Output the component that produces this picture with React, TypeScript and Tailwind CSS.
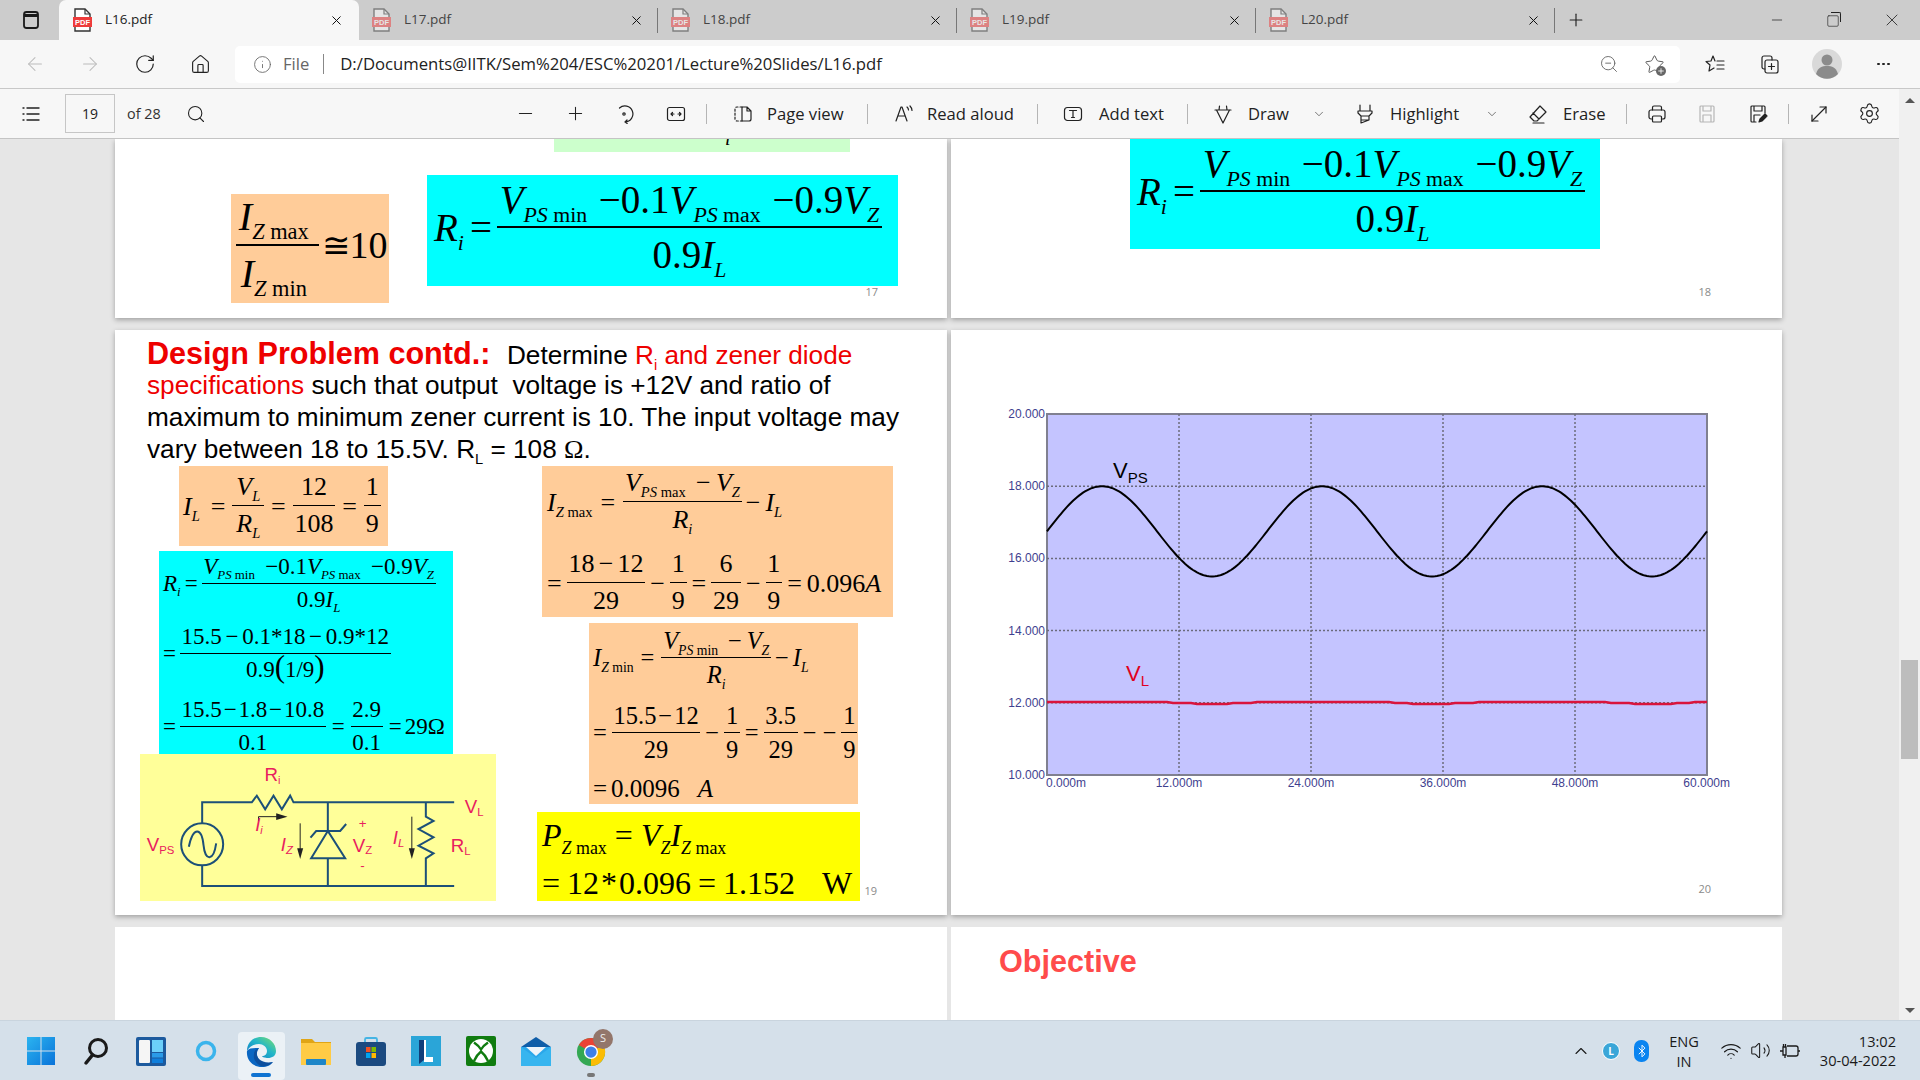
import type { ReactNode } from "react";
import {
  ArrowLeft,
  ArrowRight,
  Bluetooth,
  ChevronDown,
  ChevronUp,
  House,
  Info,
  Minus,
  MoveDiagonal,
  Plus,
  RotateCw,
  Search,
  Settings,
  Square,
  Star,
  Volume2,
  Wifi,
  X,
  ZoomOut,
} from "lucide-react";

// ---------- math helpers ----------

function Sub({ children }: { children: ReactNode }) {
  return <span className="text-[0.56em] align-[-0.42em] leading-[0]">{children}</span>;
}

function Var({ n, sub }: { n: string; sub?: ReactNode }) {
  return (
    <span className="whitespace-nowrap">
      <i>{n}</i>
      {sub ? <Sub>{sub}</Sub> : null}
    </span>
  );
}

function Frac({ top, bottom, bar = "border-b" }: { top: ReactNode; bottom: ReactNode; bar?: string }) {
  return (
    <span className="inline-flex flex-col items-stretch text-center px-0">
      <span className={`h-[1.12em] leading-[0.8em] px-[0.07em] whitespace-nowrap border-black ${bar}`}>{top}</span>
      <span className="h-[1.12em] leading-[1.38em] px-[0.07em] whitespace-nowrap">{bottom}</span>
    </span>
  );
}

// minus with the wider and the tighter math spacing
const M = () => <span className="mx-[0.16em]">−</span>;
const Mt = () => <span className="mx-[0.08em]">−</span>;

const PSmin = (
  <>
    <i>PS</i> min
  </>
);
const PSmax = (
  <>
    <i>PS</i> max
  </>
);
const Zmax = (
  <>
    <i>Z</i> max
  </>
);
const Zmin = (
  <>
    <i>Z</i> min
  </>
);

function RiTop({ gap = "ml-[0.3em]" }: { gap?: string }) {
  return (
    <>
      <Var n="V" sub={PSmin} />
      <span className={gap}>−</span>0.1
      <Var n="V" sub={PSmax} />
      <span className={gap}>−</span>0.9
      <Var n="V" sub={<i>Z</i>} />
    </>
  );
}

// ---------- small pdf mark used in tabs ----------

function PdfIcon({ faded }: { faded?: boolean }) {
  return (
    <svg width="19" height="24" viewBox="0 0 19 24" className={faded ? "opacity-50" : ""}>
      <path d="M2 1h10l5 5v17H2z" fill="#fff" stroke="#333" strokeWidth="1.4" />
      <path d="M12 1v5h5" fill="none" stroke="#333" strokeWidth="1.2" />
      <rect x="0" y="9" width="19" height="10" fill="#ee3b3b" />
      <text x="9.5" y="17" textAnchor="middle" fontSize="7.5" fontWeight="700" fill="#fff" fontFamily="Liberation Sans">
        PDF
      </text>
    </svg>
  );
}

function Tab({ name, active }: { name: string; active?: boolean }) {
  return (
    <div
      className={
        active
          ? "flex items-center justify-between w-[300px] h-[40px] pl-[14px] pr-[15px] bg-[#f7f7f7] rounded-t-[7px] text-[#222]"
          : "flex items-center justify-between w-[299px] h-[40px] pl-[13px] pr-[14px] text-[#444] relative"
      }
    >
      <div className="flex items-center gap-[13px]">
        <PdfIcon faded={!active} />
        <span className="text-[13.5px] mb-[2px]">{name}</span>
      </div>
      <X size={15} strokeWidth={1.6} className="text-[#111]" />
      {active ? null : <div className="absolute right-0 top-[8px] h-[25px] w-px bg-[#777]" />}
    </div>
  );
}

function Ico({ children }: { children: ReactNode }) {
  return (
    <svg
      width="20"
      height="20"
      viewBox="0 0 20 20"
      fill="none"
      stroke="currentColor"
      strokeWidth="1.2"
      strokeLinecap="round"
      strokeLinejoin="round"
      className="shrink-0 text-[#222]"
    >
      {children}
    </svg>
  );
}

function Sep({ ml }: { ml: string }) {
  return <div className={`w-px h-[20px] bg-[#b5b5b5] shrink-0 ${ml}`} />;
}

function Toolbar() {
  return (
    <div className="flex items-center h-[50px] bg-[#f7f7f7] border-b border-[#c4c4c4] text-[16.6px] text-[#222]">
      <div className="ml-[21px]">
        <Ico>
          <path d="M2 4h1M6 4h12M2 10h1M6 10h12M2 16h1M6 16h12" strokeWidth="1.4" />
        </Ico>
      </div>
      <div className="ml-[24px] w-[50px] h-[39px] border border-[#c6c6c6] flex items-center justify-center text-[14px]">19</div>
      <span className="ml-[12px] w-[34px] text-[14.4px] whitespace-nowrap text-[#333]">of 28</span>
      <Search size={20} strokeWidth={1.3} className="ml-[25px]" />
      <Minus size={21} strokeWidth={1.2} className="ml-[309px]" />
      <Plus size={21} strokeWidth={1.2} className="ml-[29px]" />
      <div className="ml-[28px]">
        <Ico>
          <path d="M5.500 4A8 8 0 1 1 11 17.900M11 17.900L13 16M11 17.900L13.200 19.500" />
          <circle cx="10" cy="10" r="1.200" />
        </Ico>
      </div>
      <div className="ml-[32px]">
        <Ico>
          <rect x="1.5" y="3.5" width="17" height="13" rx="2" />
          <path d="M5 10h3M5 10l1.5-1.5M5 10l1.5 1.5M15 10h-3M15 10l-1.5-1.5M15 10l-1.5 1.5" />
        </Ico>
      </div>
      <Sep ml="ml-[20px]" />
      <div className="ml-[26px]">
        <Ico>
          <path d="M9 3H4a2 2 0 0 0-2 2v10a2 2 0 0 0 2 2h5" strokeDasharray="2 2" />
          <path d="M9 3h5l4 4v8a2 2 0 0 1-2 2H9zM14 3v4h4" />
        </Ico>
      </div>
      <span className="ml-[14px] w-[78px] pt-[2px] whitespace-nowrap">Page view</span>
      <Sep ml="ml-[22px]" />
      <div className="ml-[26px]">
        <Ico>
          <path d="M2 17l5-14h1l5 14M4 12h7" />
          <path d="M13 3c1 .8 1.500 1.800 1.500 3M16 2c1.300 1.300 2 2.700 2 4.500" />
        </Ico>
      </div>
      <span className="ml-[13px] w-[87px] pt-[2px] whitespace-nowrap">Read aloud</span>
      <Sep ml="ml-[23px]" />
      <div className="ml-[25px]">
        <Ico>
          <rect x="1.500" y="3.500" width="17" height="13" rx="3" />
          <path d="M6.500 6.500h7M10 6.500v7M8.500 13.500h3" />
        </Ico>
      </div>
      <span className="ml-[16px] w-[65px] pt-[2px] whitespace-nowrap">Add text</span>
      <Sep ml="ml-[23px]" />
      <div className="ml-[25px]">
        <Ico>
          <path d="M2 6h16M3.500 6L10 19l6.500-13M6 6l.5-4M14 6l-.5-4" />
        </Ico>
      </div>
      <span className="ml-[15px] w-[41px] pt-[2px] whitespace-nowrap">Draw</span>
      <ChevronDown size={14} strokeWidth={1.2} className="ml-[23px] text-[#444]" />
      <div className="ml-[29px]">
        <Ico>
          <path d="M5 1v6h10V1M3 7h14v2l-3 3v4H6v-4L3 9zM6 12h8M6 16v3l8-3" />
        </Ico>
      </div>
      <span className="ml-[15px] w-[72px] pt-[2px] whitespace-nowrap">Highlight</span>
      <ChevronDown size={14} strokeWidth={1.2} className="ml-[23px] text-[#444]" />
      <div className="ml-[29px]">
        <Ico>
          <path d="M12 2l6 6-9 9H6l-4-4zM5 9l6 6M5 19h11" />
        </Ico>
      </div>
      <span className="ml-[15px] w-[40px] pt-[2px] whitespace-nowrap">Erase</span>
      <Sep ml="ml-[23px]" />
      <div className="ml-[20px]">
        <Ico>
          <path d="M5.500 6V3.500a1.500 1.500 0 0 1 1.500-1.500h6a1.500 1.500 0 0 1 1.500 1.500V6" />
          <path d="M5 15H4a2 2 0 0 1-2-2V8a2 2 0 0 1 2-2h12a2 2 0 0 1 2 2v5a2 2 0 0 1-2 2h-1" />
          <rect x="5.500" y="12" width="9" height="6" rx="1" />
        </Ico>
      </div>
      <div className="ml-[30px] opacity-30">
        <Ico>
          <path d="M3 3a1 1 0 0 1 1-1h12a1 1 0 0 1 1 1v14a1 1 0 0 1-1 1H4a1 1 0 0 1-1-1zM6 2v5h8V2M6 18v-7h8v7" />
        </Ico>
      </div>
      <div className="ml-[31px]">
        <Ico>
          <path d="M8 18H4a1 1 0 0 1-1-1V3a1 1 0 0 1 1-1h12a1 1 0 0 1 1 1v6M6 2v5h8V2M6 18v-7h6" />
          <path d="M11 18l1-3 5-5 2 2-5 5z" fill="currentColor" />
        </Ico>
      </div>
      <Sep ml="ml-[20px]" />
      <MoveDiagonal size={24} strokeWidth={1.2} className="ml-[18px]" />
      <Settings size={23} strokeWidth={1.2} className="ml-[27px]" />
    </div>
  );
}

function AddressBar() {
  return (
    <div className="flex items-center h-[49px] bg-[#f7f7f7] border-b border-[#c8c8c8] text-[#222]">
      <ArrowLeft size={22} strokeWidth={1.1} className="ml-[24px] text-[#bbb]" />
      <ArrowRight size={22} strokeWidth={1.1} className="ml-[33px] text-[#bbb]" />
      <RotateCw size={22} strokeWidth={1.3} className="ml-[33px]" />
      <House size={21} strokeWidth={1.3} className="ml-[34px]" />
      <div className="ml-[24px] w-[1445px] h-[37px] bg-white rounded-[5px] flex items-center">
        <Info size={19} strokeWidth={1.1} className="ml-[18px] text-[#666]" />
        <span className="ml-[11px] text-[#666] text-[16.6px]">File</span>
        <div className="ml-[14px] w-px h-[20px] bg-[#888]" />
        <span className="ml-[16px] text-[16.7px] whitespace-nowrap">D:/Documents@IITK/Sem%204/ESC%20201/Lecture%20Slides/L16.pdf</span>
        <ZoomOut size={20} strokeWidth={1.1} className="ml-auto text-[#666]" />
        <div className="relative ml-[25px] mr-[15px]">
          <Star size={21} strokeWidth={1.1} className="text-[#555]" />
          <div className="absolute -right-[1px] bottom-[-1px] w-[10px] h-[10px] rounded-full bg-[#666] flex items-center justify-center">
            <Plus size={8} strokeWidth={2.5} className="text-white" />
          </div>
        </div>
      </div>
      <div className="ml-[25px]">
        <Ico>
          <path d="M8 2l2 5M8 2L6 7l-5 .5 4 3.500L4 17l5-3M12 7h7M12 11h7M12 15h7" />
        </Ico>
      </div>
      <div className="ml-[35px]">
        <Ico>
          <rect x="5" y="6" width="13" height="13" rx="2" />
          <path d="M5 15H4a2 2 0 0 1-2-2V4a2 2 0 0 1 2-2h6a2 2 0 0 1 2 2v2M11.500 9.500v6M8.500 12.500h6" />
        </Ico>
      </div>
      <svg width="30" height="30" viewBox="0 0 30 30" className="ml-[32px] shrink-0">
        <circle cx="15" cy="15" r="15" fill="#d9d9d9" />
        <circle cx="15" cy="11" r="5.500" fill="#8b8b8b" />
        <path d="M4 25c2-7 6-8 11-8s9 1 11 8a15 15 0 0 1-22 0z" fill="#8b8b8b" />
      </svg>
      <div className="ml-[35px] flex gap-[2.500px]">
        <div className="w-[2.500px] h-[2.500px] rounded-full bg-[#222]" />
        <div className="w-[2.500px] h-[2.500px] rounded-full bg-[#222]" />
        <div className="w-[2.500px] h-[2.500px] rounded-full bg-[#222]" />
      </div>
    </div>
  );
}

// ---------- slide pieces ----------

function PageNo({ n, right, top }: { n: string; right: string; top: string }) {
  return <span className={`absolute ${right} ${top} text-[11px] text-[#8a8a8a] font-['Open_Sans',sans-serif]`}>{n}</span>;
}

function BigRi({ h }: { h: string }) {
  return (
    <div className={`flex items-center ${h} text-[39px] font-['Liberation_Serif',serif] text-black`}>
      <span className="ml-[7px]">
        <Var n="R" sub={<i>i</i>} />
      </span>
      <span className="ml-[6px] mr-[5px]">=</span>
      <Frac
        bar="border-b-2"
        top={<RiTop />}
        bottom={
          <>
            0.9<Var n="I" sub={<i>L</i>} />
          </>
        }
      />
    </div>
  );
}

function Slide17() {
  return (
    <div className="relative w-[832px] h-full bg-white overflow-hidden shadow-[0_2px_5px_rgba(0,0,0,0.3)]">
      <div className="ml-[439px] w-[296px] h-[13px] bg-[#ccffcc] overflow-hidden pl-[171px]">
        <i className="block -mt-[11px] text-[20px] leading-[20px] font-['Liberation_Serif',serif]">i</i>
      </div>
      <div className="flex items-start mt-[23px] ml-[116px]">
        <div className="mt-[19px] w-[158px] h-[109px] bg-[#ffcc99] flex items-center pl-[5px] pb-[6px] text-[40px] font-['Liberation_Serif',serif]">
          <Frac
            bar="border-b-2"
            top={
              <span className="pr-[7px]">
                <Var n="I" sub={Zmax} />
              </span>
            }
            bottom={
              <span className="pr-[7px]">
                <Var n="I" sub={Zmin} />
              </span>
            }
          />
          <span className="ml-[3px] font-['DejaVu_Sans',serif] font-extralight text-[34px]">≅</span>
          <span className="text-[38px]">10</span>
        </div>
        <div className="ml-[38px] w-[471px] h-[111px] bg-[#00ffff]">
          <BigRi h="h-[106px]" />
        </div>
      </div>
      <PageNo n="17" right="right-[69px]" top="top-[145px]" />
    </div>
  );
}

function Slide18() {
  return (
    <div className="relative w-[831px] h-full bg-white overflow-hidden shadow-[0_2px_5px_rgba(0,0,0,0.3)]">
      <div className="ml-[179px] w-[470px] h-[110px] bg-[#00ffff]">
        <BigRi h="h-[106px]" />
      </div>
      <PageNo n="18" right="right-[71px]" top="top-[145px]" />
    </div>
  );
}

function Circuit() {
  const wire = "#1c5078";
  const pink = "#e8205f";
  return (
    <svg viewBox="30 12 1067 441" className="w-[356px] h-[147px] bg-[#ffff99]" fontFamily="Liberation Sans">
      <g fill="none" stroke={wire} strokeWidth="6">
        <path d="M216 220V157H365L380 137L405 178L430 137L455 178L480 137L490 157H972" />
        <path d="M216 346V408H972" />
        <circle cx="216" cy="283" r="63" />
        <path d="M176 290C190 225 215 235 220 285C225 335 250 335 258 280" />
        <path d="M593 157V243M593 325V408" />
        <path d="M593 243L543 325H645Z" />
        <path d="M541 263L558 243H630L648 222" />
        <path d="M887 157V200L910 213L865 237L910 262L865 287L910 310L887 325V408" />
      </g>
      <g fill="none" stroke="#222" strokeWidth="3">
        <path d="M385 213V200H450" />
        <path d="M510 220V305" />
        <path d="M845 200V305" />
      </g>
      <path d="M438 190L472 200L438 210Z" fill="#222" />
      <path d="M501 295L510 327L519 295Z" fill="#222" />
      <path d="M836 295L845 327L854 295Z" fill="#222" />
      <g fill={pink} fontSize="56">
        <text x="403" y="94">
          R<tspan fontSize="32" dy="8">i</tspan>
        </text>
        <text x="50" y="304">
          V<tspan fontSize="34" dy="8">PS</tspan>
        </text>
        <text x="1004" y="190">
          V<tspan fontSize="34" dy="8">L</tspan>
        </text>
        <text x="962" y="306">
          R<tspan fontSize="34" dy="8">L</tspan>
        </text>
        <text x="668" y="305">
          V<tspan fontSize="34" dy="8">Z</tspan>
        </text>
        <text x="686" y="234" fontSize="40">+</text>
        <text x="690" y="360" fontSize="40">-</text>
        <text x="375" y="244" fontStyle="italic">
          I<tspan fontSize="32" dy="8">i</tspan>
        </text>
        <text x="452" y="304" fontStyle="italic">
          I<tspan fontSize="34" dy="8">Z</tspan>
        </text>
        <text x="788" y="282" fontStyle="italic">
          I<tspan fontSize="34" dy="8">L</tspan>
        </text>
      </g>
    </svg>
  );
}

function Slide19() {
  const red = "text-[#ee0000]";
  return (
    <div className="relative w-[832px] h-full bg-white shadow-[0_2px_5px_rgba(0,0,0,0.3)] font-['Liberation_Sans',sans-serif]">
      <div className="h-[136px] pl-[32px] pt-[7px] text-black text-[26.2px]">
        <div className="h-[32px] leading-[32px] whitespace-pre">
          <b className={`text-[30.6px] ${red}`}>Design Problem contd.:</b>
          <span className="ml-[2px]">{"  Determine "}</span>
          <span className={red}>
            R<Sub>i</Sub> and zener diode
          </span>
        </div>
        <div className="h-[32px] leading-[32px] whitespace-pre">
          <span className={red}>specifications</span> such that output  voltage is +12V and ratio of
        </div>
        <div className="h-[32px] leading-[32px] whitespace-pre">maximum to minimum zener current is 10. The input voltage may</div>
        <div className="h-[32px] leading-[32px] whitespace-pre">
          vary between 18 to 15.5V. R<Sub>L</Sub> = 108 <span className="font-['Liberation_Serif',serif]">Ω</span>.
        </div>
      </div>
      <div className="flex ml-[25px] font-['Liberation_Serif',serif] text-black">
        <div className="flex flex-col w-[356px]">
          <div className="ml-[39px] w-[209px] h-[80px] bg-[#ffcc99] flex items-center pl-[4px] text-[26px] gap-[7px]">
            <Var n="I" sub={<i>L</i>} />
            <span className="ml-[4px]">=</span>
            <Frac
              top={
                <span className="px-[2px]">
                  <Var n="V" sub={<i>L</i>} />
                </span>
              }
              bottom={
                <span className="px-[2px]">
                  <Var n="R" sub={<i>L</i>} />
                </span>
              }
            />
            <span>=</span>
            <Frac top="12" bottom="108" />
            <span>=</span>
            <Frac top="1" bottom="9" />
          </div>
          <div className="ml-[19px] mt-[5px] w-[294px] h-[203px] bg-[#00ffff] overflow-hidden text-[23px] pl-[4px]">
            <div className="flex items-center h-[66px]">
              <Var n="R" sub={<i>i</i>} />
              <span className="mx-[4px]">=</span>
              <Frac
                top={<RiTop gap="ml-[0.45em]" />}
                bottom={
                  <>
                    0.9<Var n="I" sub={<i>L</i>} />
                  </>
                }
              />
            </div>
            <div className="flex items-center h-[74px]">
              <span className="mr-[4px]">=</span>
              <Frac
                top={
                  <>
                    15.5
                    <M />
                    0.1*18
                    <M />
                    0.9*12
                  </>
                }
                bottom={
                  <>
                    0.9<span className="text-[1.35em] leading-[0] font-light">(</span>1/9
                    <span className="text-[1.35em] leading-[0] font-light">)</span>
                  </>
                }
              />
            </div>
            <div className="flex items-center h-[72px]">
              <span className="mr-[4px]">=</span>
              <Frac
                top={
                  <>
                    15.5
                    <Mt />
                    1.8
                    <Mt />
                    10.8
                  </>
                }
                bottom="0.1"
              />
              <span className="mx-[6px]">=</span>
              <Frac top="2.9" bottom="0.1" />
              <span className="ml-[6px] whitespace-nowrap">
                =<span className="ml-[3px]">29Ω</span>
              </span>
            </div>
          </div>
          <Circuit />
        </div>
        <div className="flex flex-col ml-[41px]">
          <div className="ml-[5px] w-[351px] h-[151px] bg-[#ffcc99] overflow-hidden pl-[5px] text-[26px]">
            <div className="flex items-center h-[72px]">
              <Var n="I" sub={Zmax} />
              <span className="mx-[8px]">=</span>
              <Frac
                top={
                  <>
                    <Var n="V" sub={PSmax} />
                    <span className="ml-[0.4em] mr-[0.2em]">−</span>
                    <Var n="V" sub={<i>Z</i>} />
                  </>
                }
                bottom={<Var n="R" sub={<i>i</i>} />}
              />
              <span className="ml-[4px] whitespace-nowrap">
                <span className="mr-[5px]">−</span>
                <Var n="I" sub={<i>L</i>} />
              </span>
            </div>
            <div className="flex items-center h-[90px] gap-[5px]">
              <span>=</span>
              <Frac
                top={
                  <>
                    18
                    <M />
                    12
                  </>
                }
                bottom="29"
              />
              <span>−</span>
              <Frac top="1" bottom="9" />
              <span>=</span>
              <Frac top="6" bottom="29" />
              <span>−</span>
              <Frac top="1" bottom="9" />
              <span className="whitespace-nowrap">
                =<span className="ml-[5px]">0.096</span>
                <i>A</i>
              </span>
            </div>
          </div>
          <div className="ml-[52px] mt-[6px] w-[269px] h-[181px] bg-[#ffcc99] overflow-hidden pl-[4px] text-[24.5px]">
            <div className="flex items-center h-[70px]">
              <Var n="I" sub={Zmin} />
              <span className="mx-[7px]">=</span>
              <Frac
                top={
                  <>
                    <Var n="V" sub={PSmin} />
                    <span className="ml-[0.4em] mr-[0.2em]">−</span>
                    <Var n="V" sub={<i>Z</i>} />
                  </>
                }
                bottom={<Var n="R" sub={<i>i</i>} />}
              />
              <span className="ml-[4px] whitespace-nowrap">
                <span className="mr-[4px]">−</span>
                <Var n="I" sub={<i>L</i>} />
              </span>
            </div>
            <div className="flex items-center h-[80px] gap-[5px]">
              <span>=</span>
              <Frac
                top={
                  <>
                    15.5
                    <Mt />
                    12
                  </>
                }
                bottom="29"
              />
              <span>−</span>
              <Frac top="1" bottom="9" />
              <span>=</span>
              <Frac top="3.5" bottom="29" />
              <span className="whitespace-pre">− −</span>
              <Frac top="1" bottom="9" />
            </div>
            <div className="h-[31px] leading-[31px] whitespace-pre text-[25px]">
              =<span className="ml-[4px]">0.0096</span>
              <i className="ml-[18px]">A</i>
            </div>
          </div>
          <div className="mt-[8px] w-[323px] h-[89px] bg-[#ffff00] overflow-hidden pl-[5px] text-[32px]">
            <div className="h-[46px] leading-[46px] whitespace-pre">
              <Var n="P" sub={Zmax} />
              <span className="mx-[8px]">=</span>
              <Var n="V" sub={<i>Z</i>} />
              <Var n="I" sub={Zmax} />
            </div>
            <div className="h-[50px] leading-[50px] whitespace-pre">
              =<span className="ml-[7px]">12</span>
              <span className="mx-[2px]">*</span>0.096
              <span className="mx-[7px]">=</span>1.152<span className="ml-[27px]">W</span>
            </div>
          </div>
        </div>
      </div>
      <PageNo n="19" right="right-[70px]" top="top-[553px]" />
    </div>
  );
}

function Chart() {
  const axis = "#3f3f8f";
  const x0 = 57;
  const x1 = 717;
  const y0 = 14;
  const y1 = 375;
  const vToY = (v: number) => y1 - ((v - 10) / 10) * (y1 - y0);
  const sine = Array.from({ length: 331 }, (_, i) => {
    const x = x0 + i * 2;
    const t = i * 2 / 11;
    const v = 16.75 + 1.25 * Math.sin((2 * Math.PI * t) / 20);
    return `${x},${vToY(v).toFixed(1)}`;
  }).join(" ");
  const load = Array.from({ length: 111 }, (_, i) => {
    const x = x0 + i * 6;
    const t = i * 6 / 11;
    const dip = Math.max(0, -Math.sin((2 * Math.PI * t) / 20) - 0.1);
    return `${x},${(302 + Math.round(dip * 2)).toFixed(0)}`;
  }).join(" ");
  const xs = [0, 12, 24, 36, 48, 60];
  const ys = [20, 18, 16, 14, 12, 10];
  return (
    <svg viewBox="0 0 760 400" className="w-[760px] h-[400px]" fontFamily="Liberation Sans">
      <rect x={x0} y={y0} width={x1 - x0} height={y1 - y0} fill="#c4c4ff" stroke="#808090" strokeWidth="2" />
      {[12, 24, 36, 48].map((m) => (
        <line key={m} x1={x0 + m * 11} x2={x0 + m * 11} y1={y0} y2={y1} stroke="#6b6b7b" strokeWidth="1.500" strokeDasharray="2 2" />
      ))}
      {[18, 16, 14, 12].map((v) => (
        <line key={v} x1={x0} x2={x1} y1={vToY(v)} y2={vToY(v)} stroke="#6b6b7b" strokeWidth="1.500" strokeDasharray="2 2" />
      ))}
      <polyline points={sine} fill="none" stroke="#000" strokeWidth="2" />
      <polyline points={load} fill="none" stroke="#d9143c" strokeWidth="2.500" />
      {ys.map((v) => (
        <text key={v} x={x0 - 2} y={vToY(v) + 4} textAnchor="end" fontSize="12" fill={axis}>
          {v}.000
        </text>
      ))}
      {xs.map((m) => (
        <text
          key={m}
          x={m === 0 ? x0 - 1 : m === 60 ? x1 + 23 : x0 + m * 11}
          y={387}
          textAnchor={m === 0 ? "start" : m === 60 ? "end" : "middle"}
          fontSize="12"
          fill={axis}
        >
          {m === 0 ? "0.000m" : `${m}.000m`}
        </text>
      ))}
      <text x="123" y="78" fontSize="22" fill="#000">
        V<tspan fontSize="15" dy="5">PS</tspan>
      </text>
      <text x="136" y="281" fontSize="22" fill="#e00020">
        V<tspan fontSize="15" dy="5">L</tspan>
      </text>
    </svg>
  );
}

function Slide20() {
  return (
    <div className="relative w-[831px] h-full bg-white shadow-[0_2px_5px_rgba(0,0,0,0.3)]">
      <div className="ml-[39px] pt-[70px]">
        <Chart />
      </div>
      <PageNo n="20" right="right-[71px]" top="top-[551px]" />
    </div>
  );
}

function Pages() {
  return (
    <div className="h-[881px] bg-[#e6e6e6] overflow-hidden pl-[115px] flex flex-col gap-[12px]">
      <div className="flex gap-[4px] h-[179px] shrink-0">
        <Slide17 />
        <Slide18 />
      </div>
      <div className="flex gap-[4px] h-[585px] shrink-0">
        <Slide19 />
        <Slide20 />
      </div>
      <div className="flex gap-[4px] h-[93px] shrink-0">
        <div className="w-[832px] bg-white" />
        <div className="w-[831px] bg-white pl-[48px] pt-[12px] text-[30.6px] font-bold text-[#ff4b4b] font-['Liberation_Sans',sans-serif]">Objective</div>
      </div>
    </div>
  );
}

function Scrollbar() {
  return (
    <div className="w-[21px] bg-[#f0f0f0] flex flex-col items-center">
      <div className="mt-[9px] w-0 h-0 border-x-[5px] border-x-transparent border-b-[5px] border-b-[#555]" />
      <div className="mt-[557px] w-[17px] h-[99px] bg-[#bdbdbd]" />
      <div className="mt-auto mb-[7px] w-0 h-0 border-x-[5px] border-x-transparent border-t-[5px] border-t-[#555]" />
    </div>
  );
}

// ---------- taskbar icons ----------

function Taskbar() {
  return (
    <div className="relative h-[60px] bg-[#d5e0ea] border-t border-[#c9d4de] flex items-center pl-[26px] gap-[25px] font-['Open_Sans',sans-serif] text-[#1a1a1a]">
      <svg width="30" height="30" viewBox="0 0 30 30" className="shrink-0">
        <defs>
          <linearGradient id="winb" x1="0" y1="0" x2="1" y2="1">
            <stop offset="0" stopColor="#2bb4f0" />
            <stop offset="1" stopColor="#0a73d9" />
          </linearGradient>
        </defs>
        <path d="M1 1h13.500v13.500H1zM15.500 1H29v13.500H15.500zM1 15.500h13.500V29H1zM15.500 15.500H29V29H15.500z" fill="url(#winb)" />
      </svg>
      <svg width="30" height="30" viewBox="0 0 30 30" className="shrink-0">
        <circle cx="17" cy="12" r="8.500" fill="none" stroke="#1a1a1a" strokeWidth="3" />
        <path d="M11.500 19L5 27" stroke="#1a1a1a" strokeWidth="3.500" strokeLinecap="round" />
      </svg>
      <svg width="30" height="30" viewBox="0 0 30 30" className="shrink-0">
        <rect width="30" height="29" y="1" rx="2" fill="#1c5a9e" />
        <rect x="3" y="4" width="11" height="23" rx="1" fill="#f5f5f5" />
        <rect x="16" y="4" width="11" height="12" fill="#6cd0fa" />
        <rect x="16" y="17" width="11" height="4.500" fill="#2a9be8" />
        <rect x="16" y="22.500" width="11" height="4.500" fill="#0f7fdc" />
      </svg>
      <svg width="30" height="30" viewBox="0 0 30 30" className="shrink-0">
        <ellipse cx="15" cy="15" rx="8.500" ry="8.500" fill="none" stroke="#3ab4ec" strokeWidth="3.500" />
      </svg>
      <div className="relative w-[30px] h-[30px] shrink-0">
        <div className="absolute -left-[8px] -top-[4px] w-[47px] h-[48px] rounded-[4px] bg-[#ebf1f6]" />
        <div className="absolute left-[5px] top-[37px] w-[20px] h-[4px] rounded-full bg-[#0f73d2]" />
        <svg width="30" height="32" viewBox="0 0 30 32" className="relative">
          <defs>
            <linearGradient id="edg" x1="0" y1="1" x2="1" y2="0">
              <stop offset="0" stopColor="#0c72c8" />
              <stop offset="0.55" stopColor="#22b6c8" />
              <stop offset="1" stopColor="#7ee06a" />
            </linearGradient>
          </defs>
          <path d="M1 15C1 6 8 1 15 1c9 0 15 7 15 14 0 5-4 7-8 7-3 0-6-1-6-2 3 0 5-2 5-5 0-4-4-7-8-7C7 8 3 11 1 15z" fill="url(#edg)" />
          <path d="M1 15C0 25 8 31 16 31c5 0 9-2 11-5-4 2-12 2-15-4-2-4-1-7 1-10-6 0-10 0-12 3z" fill="#0a66c2" />
          <path d="M13 12c-3 3-3 8 0 11 3 3 8 4 14 3-4 4-9 5-12 4 -5-2-8-7-7-12 0-3 2-5 5-6z" fill="#0c4f9e" />
        </svg>
      </div>
      <svg width="30" height="30" viewBox="0 0 30 30" className="shrink-0">
        <path d="M0 3h11l3 3h16v4H0z" fill="#e0a516" />
        <rect y="7" width="30" height="22" fill="#ffcb45" />
        <rect x="5" y="23" width="20" height="6" rx="1" fill="#1e86c8" />
      </svg>
      <svg width="30" height="30" viewBox="0 0 30 30" className="shrink-0">
        <path d="M9 7V3.500A1.500 1.500 0 0 1 10.500 2h9A1.500 1.500 0 0 1 21 3.500V7" fill="none" stroke="#45b4e4" strokeWidth="1.800" />
        <rect y="6" width="30" height="24" rx="3" fill="#1b4a80" />
        <rect x="10" y="11" width="4.500" height="5" fill="#f25022" />
        <rect x="15.500" y="11" width="4.500" height="5" fill="#7fba00" />
        <rect x="10" y="17" width="4.500" height="5" fill="#00a4ef" />
        <rect x="15.500" y="17" width="4.500" height="5" fill="#ffb900" />
      </svg>
      <svg width="30" height="30" viewBox="0 0 30 30" className="shrink-0">
        <rect width="30" height="30" fill="#2aa5d8" />
        <path d="M8 4h5v20l-5 4z" fill="#103e7a" />
        <path d="M13 4h2v17h7v5H13z" fill="#fff" />
      </svg>
      <svg width="30" height="30" viewBox="0 0 30 30" className="shrink-0">
        <rect width="30" height="30" rx="2" fill="#107c10" />
        <circle cx="15" cy="15" r="12" fill="#fff" />
        <path d="M8 6.500C11 8.500 13.500 11 15 13.500C16.500 11 19 8.500 22 6.500M8 25C10 20.500 12.500 17.500 15 15.500C17.500 17.500 20 20.500 22 25" fill="none" stroke="#107c10" strokeWidth="2.400" />
      </svg>
      <svg width="30" height="30" viewBox="0 0 30 30" className="shrink-0">
        <path d="M0 11L15 1l15 10z" fill="#0f5da8" />
        <path d="M0 11h30v19H0z" fill="#2aa7ea" />
        <path d="M5 11h20L15 20z" fill="#eef4fa" />
        <path d="M0 11L15 22 30 11v19H0z" fill="#37b5ef" />
      </svg>
      <div className="relative w-[30px] h-[30px] shrink-0">
        <svg width="30" height="32" viewBox="0 0 32 32">
          <circle cx="16" cy="16" r="15" fill="#34a853" />
          <path d="M16 16L3 8.500A15 15 0 0 1 29 8.500z" fill="#ea4335" />
          <path d="M16 16L29 8.500A15 15 0 0 1 16 31z" fill="#fbbc05" />
          <circle cx="16" cy="16" r="7.500" fill="#fff" />
          <circle cx="16" cy="16" r="6" fill="#3f7fe8" />
        </svg>
        <div className="absolute left-[17px] -top-[7px] w-[20px] h-[20px] rounded-full bg-[#93766b] text-[#eee] text-[11px] flex items-center justify-center">S</div>
        <div className="absolute left-[11px] top-[37px] w-[8px] h-[4px] rounded-full bg-[#777]" />
      </div>

      <div className="ml-auto flex items-center h-full pr-[24px] text-[14.6px]">
        <ChevronUp size={20} strokeWidth={1.3} />
        <div className="ml-[11px] w-[18px] h-[18px] rounded-full bg-[#3aa6d8] border border-white flex items-center justify-center text-[10px] font-bold text-white leading-none">L</div>
        <div className="ml-[14px] w-[15px] h-[22px] rounded-[7px] bg-[#0a84f0] flex items-center justify-center">
          <Bluetooth size={14} strokeWidth={1.6} className="text-white" />
        </div>
        <div className="ml-[15px] w-[40px] flex flex-col items-center leading-[20px]">
          <span>ENG</span>
          <span>IN</span>
        </div>
        <Wifi size={22} strokeWidth={1.3} className="ml-[16px]" />
        <Volume2 size={21} strokeWidth={1.2} className="ml-[8px]" />
        <svg width="22" height="22" viewBox="0 0 22 22" fill="none" stroke="#1a1a1a" strokeWidth="1.300" className="ml-[8px]">
          <path d="M8 6h9a2 2 0 0 1 2 2v6a2 2 0 0 1-2 2H8" />
          <path d="M19 11h2M1 11h3M4 7h3v8H4zM4.500 4v3M6.500 4v3M6 15v3" />
        </svg>
        <div className="ml-[8px] w-[87px] flex flex-col items-end leading-[19px]">
          <span>13:02</span>
          <span>30-04-2022</span>
        </div>
      </div>
    </div>
  );
}

export default function App() {
  return (
    <div className="w-[1920px] h-[1080px] overflow-hidden flex flex-col font-['Open_Sans',sans-serif]">
      <div className="flex items-center h-[40px] bg-[#cccccc]">
        <div className="w-[59px] flex justify-center pl-[2px]">
          <svg width="20" height="20" viewBox="0 0 20 20" fill="none" stroke="#1a1a1a" strokeWidth="1.800">
            <rect x="3" y="2" width="14" height="16" rx="2.500" />
            <path d="M3 5.500h14" strokeWidth="3" />
          </svg>
        </div>
        <Tab name="L16.pdf" active />
        <Tab name="L17.pdf" />
        <Tab name="L18.pdf" />
        <Tab name="L19.pdf" />
        <Tab name="L20.pdf" />
        <Plus size={20} strokeWidth={1.4} className="ml-[11px] text-[#222]" />
        <Minus size={16} strokeWidth={1.1} className="ml-[183px] text-[#222]" />
        <div className="relative ml-[41px] w-[16px] h-[16px]">
          <Square size={14} strokeWidth={1.1} className="absolute left-0 bottom-0 text-[#222]" />
          <div className="absolute right-[1px] top-[0px] w-[10px] h-[10px] border-t border-r border-[#222] rounded-tr-[2px]" />
        </div>
        <X size={20} strokeWidth={1} className="ml-[40px] text-[#222]" />
      </div>
      <AddressBar />
      <div className="flex h-[931px]">
        <div className="w-[1899px] flex flex-col">
          <Toolbar />
          <Pages />
        </div>
        <Scrollbar />
      </div>
      <Taskbar />
    </div>
  );
}
